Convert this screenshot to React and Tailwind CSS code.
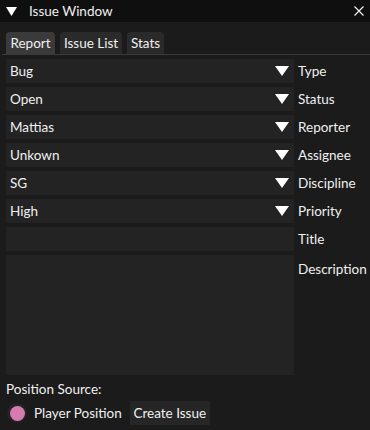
import React from "react";

const rows = [
  ["Bug", "Type"],
  ["Open", "Status"],
  ["Mattias", "Reporter"],
  ["Unkown", "Assignee"],
  ["SG", "Discipline"],
  ["High", "Priority"],
];

function Tri({ w, h }) {
  return (
    <svg width={w} height={h} viewBox={`0 0 ${w} ${h}`} className="block shrink-0">
      <polygon points={`0,0 ${w},0 ${w / 2},${h}`} fill="#ffffff" />
    </svg>
  );
}

export default function App() {
  return (
    <div
      className="w-[370px] h-[430px] bg-[#1b1b1b] text-[#f0f0f0] text-[13.5px] leading-none overflow-hidden"
      style={{ fontFamily: "Lato, 'Open Sans', sans-serif" }}
    >
      <div className="h-[22px] bg-[#0f0f0f] flex items-center pl-[6px] pr-[6px]">
        <Tri w={11} h={9} />
        <span className="ml-[12px] pt-[1px]">Issue Window</span>
        <div className="ml-auto">
          <svg width="10" height="10" viewBox="0 0 10 10" className="block">
            <path d="M0.5 0.5 L9.5 9.5 M9.5 0.5 L0.5 9.5" stroke="#f0f0f0" strokeWidth="1.2" />
          </svg>
        </div>
      </div>
      <div className="mt-[10px] px-[6px] flex gap-[5px] h-[22px]">
        <div className="w-[49px] h-[22px] pt-[1px] rounded-t-[4px] bg-[#3a3a3a] flex items-center justify-center">Report</div>
        <div className="w-[62px] h-[22px] pt-[1px] rounded-t-[4px] bg-[#2a2a2a] flex items-center justify-center">Issue List</div>
        <div className="w-[37px] h-[22px] pt-[1px] rounded-t-[4px] bg-[#2a2a2a] flex items-center justify-center">Stats</div>
      </div>
      <div className="ml-[2px] h-px bg-[#3a3a3a]" />
      <div className="px-[6px] pt-[4px] flex flex-col gap-[4px]">
        {rows.map(([v, l]) => (
          <div key={l} className="flex items-center gap-[4px] h-[24px]">
            <div className="w-[288px] shrink-0 h-[24px] bg-[#232323] flex items-center">
              <span className="pl-[4px] pt-[1px] flex-1">{v}</span>
              <div className="w-[24px] h-[24px] flex items-center justify-center">
                <Tri w={14} h={10} />
              </div>
            </div>
            <span className="whitespace-nowrap pt-[1px]">{l}</span>
          </div>
        ))}
        <div className="flex items-center gap-[4px] h-[24px]">
          <div className="w-[288px] shrink-0 h-[24px] bg-[#232323]" />
          <span className="pt-[1px]">Title</span>
        </div>
        <div className="flex items-start gap-[4px] h-[120px]">
          <div className="w-[288px] shrink-0 h-[120px] bg-[#232323]" />
          <span className="pt-[8px] whitespace-nowrap">Description</span>
        </div>
        <div className="h-[18px] pt-[3px] flex items-center">Position Source:</div>
        <div className="flex items-center h-[24px]">
          <div className="w-[20px] h-[20px] ml-[1px] shrink-0 rounded-full bg-[#232323] flex items-center justify-center">
            <div className="w-[15px] h-[15px] rounded-full bg-[#d67bb0]" />
          </div>
          <span className="ml-[7px] pt-[1px] whitespace-nowrap">Player Position</span>
          <div className="ml-[8px] w-[80px] pt-[1px] shrink-0 h-[24px] bg-[#262626] flex items-center justify-center">Create Issue</div>
        </div>
      </div>
    </div>
  );
}
